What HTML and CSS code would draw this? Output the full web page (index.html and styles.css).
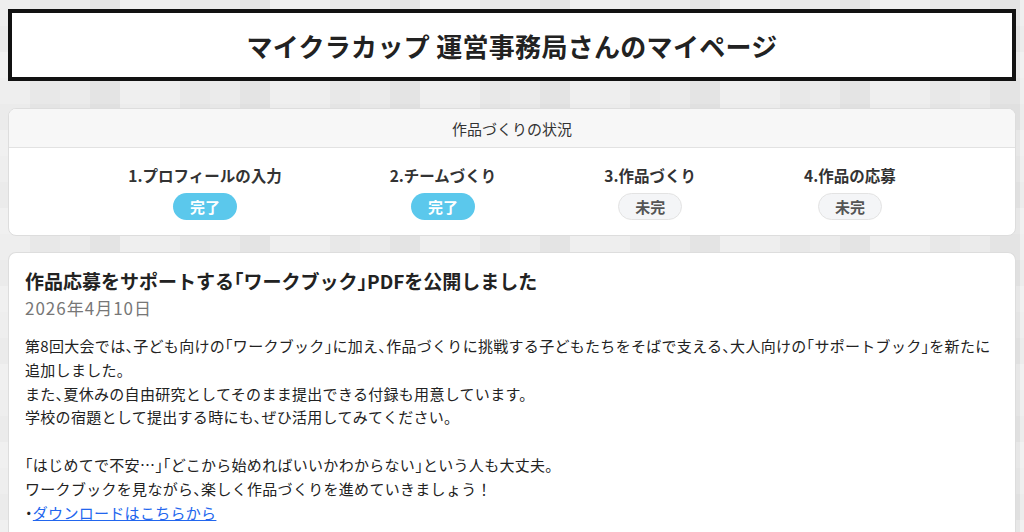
FILE: index.html
```html
<!DOCTYPE html>
<html lang="ja">
<head>
    <meta charset="UTF-8">
    <meta name="viewport" content="width=device-width, initial-scale=1.0">
    <title>マイページ</title>
    <link rel="stylesheet" href="styles.css">
</head>
<body>
    <header class="page-header">
        <h1>マイクラカップ 運営事務局さんのマイページ</h1>
    </header>

    <section class="card status-card">
        <div class="card-head">作品づくりの状況</div>
        <div class="steps">
            <div class="step">
                <div class="step-label">1.プロフィールの入力</div>
                <span class="badge done">完了</span>
            </div>
            <div class="step">
                <div class="step-label">2.チームづくり</div>
                <span class="badge done">完了</span>
            </div>
            <div class="step">
                <div class="step-label">3.作品づくり</div>
                <span class="badge todo">未完</span>
            </div>
            <div class="step">
                <div class="step-label">4.作品の応募</div>
                <span class="badge todo">未完</span>
            </div>
        </div>
    </section>

    <section class="card news-card">
        <h2>作品応募をサポートする「ワークブック」PDFを公開しました</h2>
        <div class="news-date">2026年4月10日</div>
        <div class="news-body">
            <p>第8回大会では、子ども向けの「ワークブック」に加え、作品づくりに挑戦する子どもたちをそばで支える、大人向けの「サポートブック」を新たに追加しました。<br>
            また、夏休みの自由研究としてそのまま提出できる付録も用意しています。<br>
            学校の宿題として提出する時にも、ぜひ活用してみてください。</p>
            <p>「はじめてで不安…」「どこから始めればいいかわからない」という人も大丈夫。<br>
            ワークブックを見ながら、楽しく作品づくりを進めていきましょう<span class="full">！</span><br>
            ・<a href="#">ダウンロードはこちらから</a></p>
        </div>
    </section>
</body>
</html>
```

FILE: styles.css
```css
body {
    margin: 0;
    padding: 9px 8px 0;
    font-family: "Noto Sans CJK JP", "Noto Sans", sans-serif;
    color: #333;
    background-color: #e7e7e7;
    background-image:
        linear-gradient(90deg, rgba(255,255,255,0.25) 0 30px, rgba(0,0,0,0) 30px 60px, rgba(255,255,255,0.12) 60px 90px, rgba(0,0,0,0.015) 90px 120px, rgba(255,255,255,0.3) 120px 150px),
        linear-gradient(0deg, rgba(255,255,255,0.15) 0 26px, rgba(0,0,0,0.012) 26px 52px, rgba(255,255,255,0.06) 52px 78px);
    background-size: 150px 100%, 100% 78px;
    min-height: 532px;
    box-sizing: border-box;
}

.page-header {
    height: 72px;
    border: 4px solid #111;
    background: #fff;
    box-sizing: border-box;
    display: flex;
    align-items: center;
    justify-content: center;
}
.page-header h1 {
    margin: 0;
    font-size: 26px;
    font-weight: bold;
    color: #222;
    letter-spacing: 0.3px;
}

.card {
    background: #fff;
    border: 1px solid #ddd;
    border-radius: 8px;
    overflow: hidden;
}

.status-card {
    margin-top: 27px;
}
.card-head {
    height: 38px;
    background: #f7f7f7;
    border-bottom: 1px solid #e2e2e2;
    display: flex;
    align-items: center;
    justify-content: center;
    font-size: 15px;
    color: #333;
}
.steps {
    display: flex;
    justify-content: center;
    gap: 108px;
    padding: 16px 0 15px;
}
.step {
    display: flex;
    flex-direction: column;
    align-items: center;
}
.step-label {
    font-size: 15.5px;
    font-weight: bold;
    color: #333;
    line-height: 22px;
}
.badge {
    margin-top: 7px;
    width: 64px;
    height: 27px;
    box-sizing: border-box;
    border-radius: 14px;
    display: flex;
    align-items: center;
    justify-content: center;
    font-size: 15px;
    font-weight: bold;
}
.badge.done {
    background: #5bc8ec;
    color: #fff;
}
.badge.todo {
    background: #f4f5f7;
    border: 1px solid #e3e3e3;
    color: #555;
}

.news-card {
    margin-top: 16px;
    padding: 14px 16px 20px;
    border-bottom: none;
    border-radius: 8px 8px 0 0;
    font-feature-settings: "halt";
}
.news-card h2 {
    margin: 0;
    font-size: 19px;
    font-weight: bold;
    color: #222;
    line-height: 28px;
}
.news-date {
    font-size: 17px;
    color: #777;
    line-height: 24px;
    margin-top: 1px;
    letter-spacing: 1px;
}
.news-body {
    margin-top: 14px;
    font-size: 15px;
    line-height: 23.8px;
    letter-spacing: 0.3px;
    color: #222;
}
.news-body p {
    margin: 0 0 23.8px;
}
.news-body .full {
    font-feature-settings: normal;
}
.news-body a {
    color: #2266ee;
    text-decoration: underline;
}
```
